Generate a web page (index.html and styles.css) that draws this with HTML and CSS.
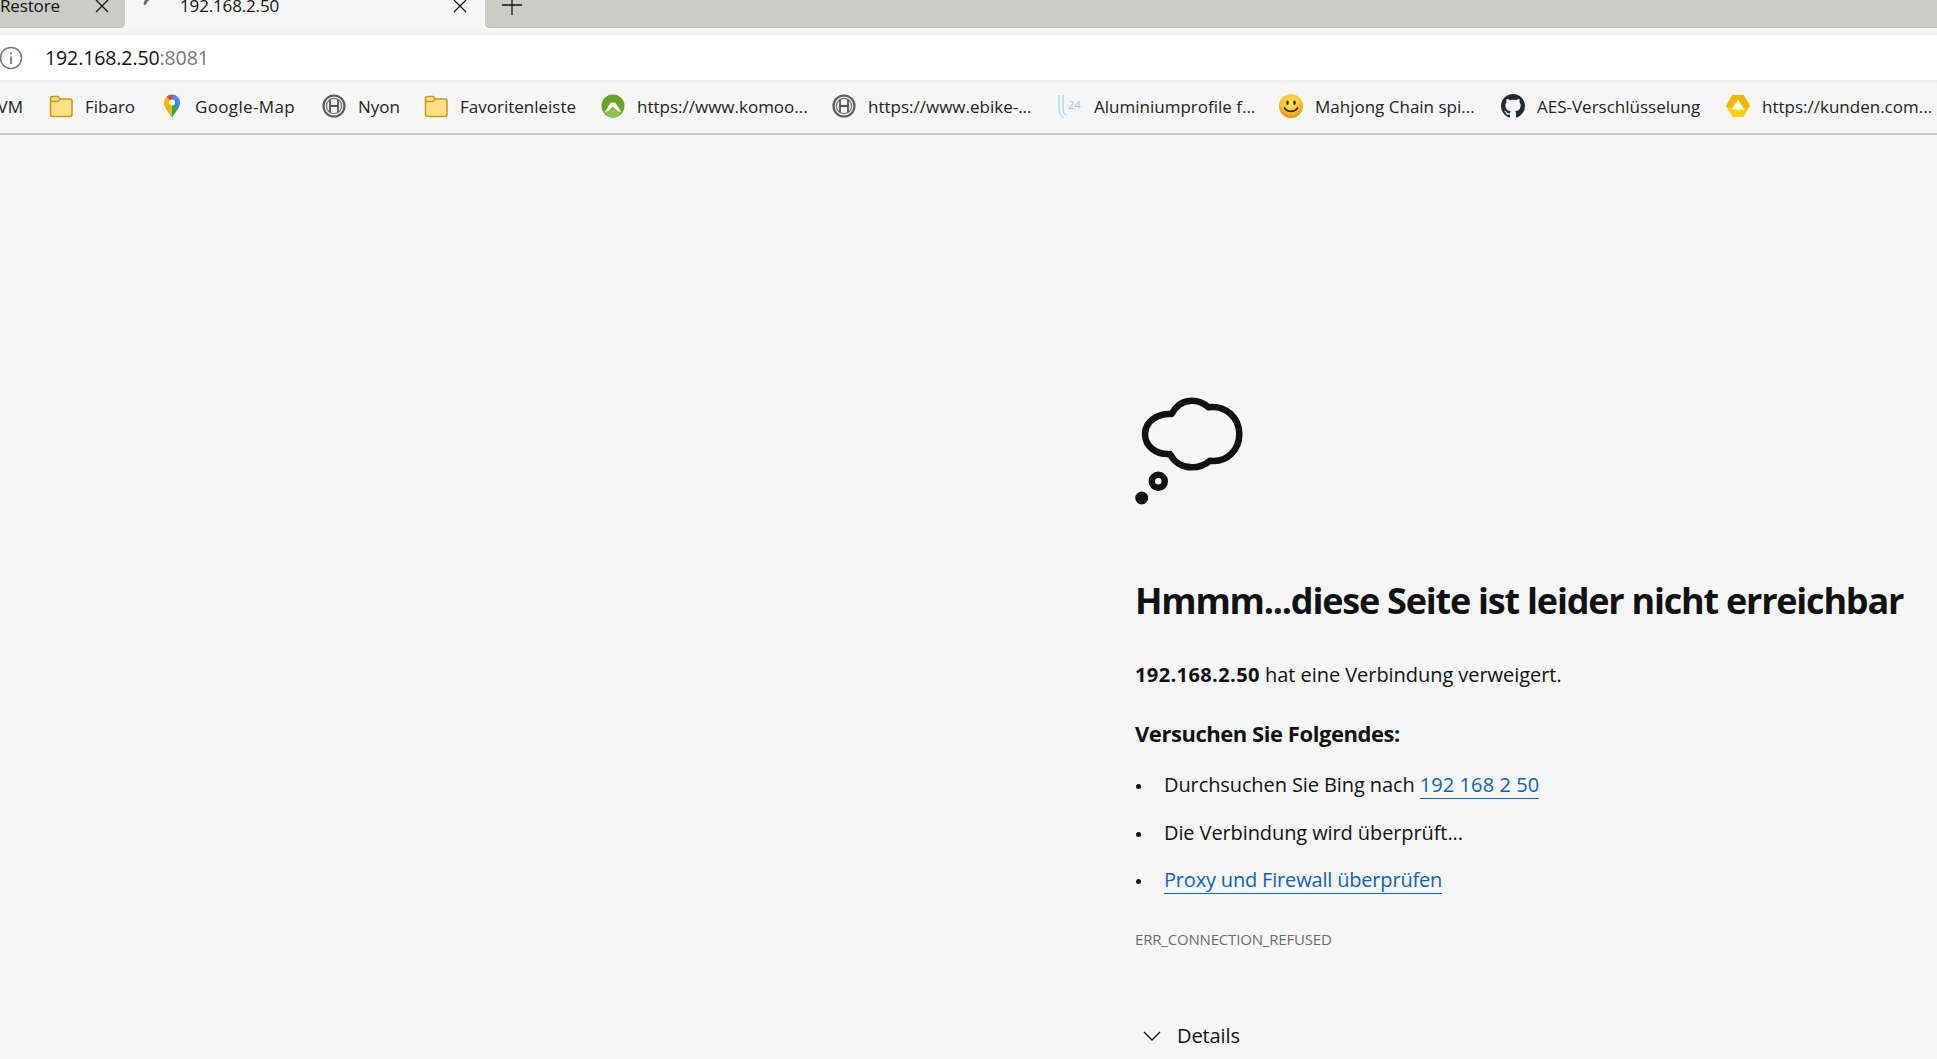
FILE: index.html
```html
<!DOCTYPE html>
<html lang="de">
<head>
<meta charset="utf-8">
<title>192.168.2.50</title>
<link rel="stylesheet" href="styles.css">
</head>
<body>
<svg class="defs" width="0" height="0" aria-hidden="true">
  <symbol id="folder" viewBox="0 0 24 24">
    <path d="M1.5 7V4.5A2 2 0 0 1 3.500 2.500H9L11.500 5H21A2 2 0 0 1 23 7V20.500A2 2 0 0 1 21 22.500H3.500A2 2 0 0 1 1.500 20.500Z" fill="#ffdf86" stroke="#c79a1e" stroke-width="1.600"/>
    <path d="M1.500 7.500H8.500L11.500 5" fill="none" stroke="#c79a1e" stroke-width="1.600"/>
  </symbol>
  <symbol id="bosch" viewBox="0 0 24 24">
    <circle cx="12" cy="12" r="10.500" fill="#f4f4f4" stroke="#5c5c5c" stroke-width="2.200"/>
    <circle cx="12" cy="12" r="7.600" fill="none" stroke="#777" stroke-width="1.400"/>
    <path d="M8 5.500V18.500M16 5.500V18.500M8 12H16" fill="none" stroke="#555" stroke-width="1.800"/>
  </symbol>
  <symbol id="x" viewBox="0 0 14 14">
    <path d="M1 1L13 13M13 1L1 13" fill="none" stroke="#111" stroke-width="1.300"/>
  </symbol>
</svg>

<header class="tabstrip">
  <div class="tab tab-back">
    <span class="tab-title">Restore</span>
    <svg class="tab-close"><use href="#x"/></svg>
  </div>
  <div class="tab tab-active">
    <svg class="tab-spinner" viewBox="0 0 10 10"><path d="M3 6.500C3.500 4.500 5 2.500 7.500 1.500" fill="none" stroke="#666" stroke-width="2.800" stroke-linecap="round"/></svg>
    <span class="tab-title tab-title-active">192.168.2.50</span>
    <svg class="tab-close"><use href="#x"/></svg>
  </div>
  <div class="tab-rest">
    <svg class="tab-plus" viewBox="0 0 20 20"><path d="M10 0V20M0 10H20" fill="none" stroke="#111" stroke-width="1.300" transform="translate(0 -5)"/></svg>
  </div>
</header>
<div class="tab-fade"></div>

<div class="addressbar">
  <svg class="info" viewBox="0 0 24 24">
    <circle cx="11" cy="12" r="10.500" fill="none" stroke="#777" stroke-width="1.500"/>
    <path d="M11 10.500V18M11 6.500V8.300" fill="none" stroke="#666" stroke-width="1.600"/>
  </svg>
  <span class="url">192.168.2.50<span class="url-port">:8081</span></span>
</div>

<nav class="bookmarks">
  <a class="bm bm-cut">VM</a>
  <a class="bm"><svg class="bm-icon"><use href="#folder"/></svg>Fibaro</a>
  <a class="bm">
    <svg class="bm-icon" viewBox="0 0 24 24">
      <path d="M12 23.500C9.500 19 4 14.500 4 8.500L12 8.500Z" fill="#fbbc04"/>
      <path d="M12 23.500C14.500 19 20 14.500 20 8.500L12 11Z" fill="#34a853"/>
      <path d="M6.300 3C4.800 4.500 4 6.300 4 8.500C4 10.500 5 12.500 6 14L12 8.500Z" fill="#fbbc04"/>
      <path d="M6.300 3C7.700 1.500 9.700 .5 12 .5L12 8.500Z" fill="#ea4335"/>
      <path d="M12 .5C14 .5 16 1.300 17.500 2.700L12 8.500Z" fill="#4285f4"/>
      <path d="M17.500 2.700C19.100 4.200 20 6.300 20 8.500C20 10.500 19 12.500 18 14L12 8.500Z" fill="#4285f4"/>
      <path d="M6 14L12 8.500L18 14L12 23.500Z" fill="#34a853"/>
      <path d="M6 14L12 8.500V23.500C10 20 8 17 6 14Z" fill="#f4b400"/>
      <circle cx="12" cy="8.500" r="3" fill="#fff"/>
    </svg><span class="bm-wide">Google-Map</span></a>
  <a class="bm"><svg class="bm-icon"><use href="#bosch"/></svg>Nyon</a>
  <a class="bm"><svg class="bm-icon"><use href="#folder"/></svg>Favoritenleiste</a>
  <a class="bm">
    <svg class="bm-icon" viewBox="0 0 24 24">
      <circle cx="12" cy="12" r="11.500" fill="#6aa127"/>
      <path d="M3.500 18.500L9 9.800C10.300 7.900 13.700 7.900 15 9.800L20.500 18.500L16.500 17L12 12.500L7.500 17Z" fill="#fff"/>
      <path d="M7.500 17L12 12.500L16.500 17L20.500 18.500C18.500 21.500 15.500 23.500 12 23.500C8.500 23.500 5.500 21.500 3.500 18.500Z" fill="#8bc34a"/>
    </svg>https://www.komoo...</a>
  <a class="bm"><svg class="bm-icon"><use href="#bosch"/></svg>https://www.ebike-...</a>
  <a class="bm">
    <svg class="bm-icon" viewBox="0 0 24 24">
      <path d="M1 1V15C1 19 2.500 22 6 24M5 1V15C5 18 6 20 8.500 21.500" fill="none" stroke="#a7d8ee" stroke-width="1.300"/>
      <text x="10" y="14.500" class="alu-text">24</text>
    </svg>Aluminiumprofile f...</a>
  <a class="bm">
    <svg class="bm-icon" viewBox="0 0 24 24">
      <defs><radialGradient id="sm" cx="50%" cy="35%" r="65%"><stop offset="0" stop-color="#ffe45c"/><stop offset=".65" stop-color="#fdc22c"/><stop offset="1" stop-color="#f08a12"/></radialGradient></defs>
      <circle cx="12" cy="12" r="12" fill="url(#sm)"/>
      <ellipse cx="8.500" cy="8.800" rx="1.300" ry="2.200" fill="#3a2a10"/>
      <ellipse cx="15.500" cy="8.800" rx="1.300" ry="2.200" fill="#3a2a10"/>
      <path d="M5.500 14C8 18.500 16 18.500 18.500 14" fill="none" stroke="#3a2a10" stroke-width="1.700" stroke-linecap="round"/>
    </svg>Mahjong Chain spi...</a>
  <a class="bm">
    <svg class="bm-icon" viewBox="0 0 16 16">
      <path fill="#24292e" d="M8 0C3.580 0 0 3.580 0 8c0 3.540 2.290 6.530 5.470 7.590.4.070.55-.17.55-.38 0-.19-.01-.82-.01-1.490-2.010.37-2.530-.49-2.690-.94-.09-.23-.48-.94-.82-1.130-.28-.15-.68-.52-.01-.53.63-.01 1.080.58 1.230.82.72 1.210 1.870.87 2.330.66.07-.52.28-.87.51-1.070-1.780-.2-3.640-.89-3.640-3.950 0-.87.31-1.590.82-2.150-.08-.2-.36-1.020.08-2.120 0 0 .67-.21 2.200.82.64-.18 1.320-.27 2-.27.68 0 1.360.09 2 .27 1.530-1.040 2.200-.82 2.200-.82.44 1.100.16 1.920.08 2.120.51.56.82 1.270.82 2.150 0 3.070-1.870 3.750-3.650 3.950.29.25.54.73.54 1.480 0 1.070-.01 1.930-.01 2.200 0 .21.15.46.55.38A8.013 8.013 0 0 0 16 8c0-4.420-3.580-8-8-8z"/>
    </svg>AES-Verschlüsselung</a>
  <a class="bm">
    <svg class="bm-icon" viewBox="0 0 24 24">
      <path d="M6.500 1H17.500L24 12L17.500 23H6.500L0 12Z" fill="#fdd00e"/>
      <path d="M6.500 1H17.500L24 12L19.500 14.500L12 5L4.500 14.500L0 12Z" fill="#f5b400"/>
      <path d="M12 6L18 15.500H6Z" fill="#fff"/>
    </svg>https://kunden.com...</a>
</nav>

<main class="error-page">
  <svg class="cloud" viewBox="0 0 120 120">
    <path class="cloud-line" d="M36.700 25C22 24 10 33 10 45C10 57 21 66 35 65C39 73 47 78.300 56.700 78.300C64 78.300 70 76 75 71.700C92 74 104.300 61 104.300 45C104.300 29 91 16 73.300 18.300C69 14 63 11.700 56.700 11.700C48 11.700 41 17 36.700 25Z"/>
    <circle class="cloud-line" cx="23.300" cy="92.300" r="6.500"/>
    <circle class="cloud-dot" cx="6.700" cy="109" r="6.500"/>
  </svg>
  <h1 class="headline">Hmmm...diese Seite ist leider nicht erreichbar</h1>
  <p class="lead"><strong class="lead-host">192.168.2.50</strong> hat eine Verbindung verweigert.</p>
  <h2 class="try">Versuchen Sie Folgendes:</h2>
  <ul class="tips">
    <li class="tip">Durchsuchen Sie Bing nach <a class="link link-query" href="#">192 168 2 50</a></li>
    <li class="tip">Die Verbindung wird überprüft...</li>
    <li class="tip"><a class="link link-proxy" href="#">Proxy und Firewall überprüfen</a></li>
  </ul>
  <div class="code">ERR_CONNECTION_REFUSED</div>
  <div class="details">
    <svg class="chevron" viewBox="0 0 18 10"><path d="M1 1L9 9L17 1" fill="none" stroke="#111" stroke-width="1.300"/></svg>
    <span>Details</span>
  </div>
</main>
</body>
</html>
```
FILE: styles.css
```css
* { box-sizing: border-box; }
html, body { margin: 0; height: 100%; overflow: hidden; }
body {
  background: #f6f6f6;
  color: #111;
  font-family: "Open Sans", "Noto Sans", "Liberation Sans", sans-serif;
}
.defs { position: absolute; }

.tabstrip { display: flex; height: 28px; background: #f6f6f6; }
.tab { display: flex; align-items: center; height: 28px; padding-bottom: 16px; font-size: 17px; line-height: 12px; }
.tab-back { width: 125px; background: #cbccc6; border-bottom-right-radius: 5px; box-shadow: inset 0 -1px 0 #bcbdb7; }
.tab-active { width: 360px; background: #f6f6f6; position: relative; }
.tab-rest { flex: 1; background: #cbccc6; border-bottom-left-radius: 5px; box-shadow: inset 0 -1px 0 #bcbdb7; }
.tab-title { flex: 1; white-space: nowrap; letter-spacing: -.15px; }
.tab-title-active { padding-left: 28px; }
.tab-close { width: 14px; height: 14px; margin-right: 16px; flex: none; }
.tab-active .tab-close { margin-right: 18px; }
.tab-spinner { width: 10px; height: 10px; margin-left: 17px; margin-top: -8px; flex: none; }
.tab-plus { display: block; width: 20px; height: 20px; margin-left: 17px; }
.tab-fade { height: 7px; background: linear-gradient(#f6f6f6 0, #f4f4f4 60%, #ececec 100%); }

.addressbar { display: flex; align-items: center; height: 45px; background: #fff; }
.info { width: 24px; height: 24px; flex: none; }
.url { margin-left: 21px; font-size: 19.500px; letter-spacing: -.1px; color: #111; }
.url-port { color: #777; }

.bookmarks {
  display: grid;
  grid-template-columns: 49px 111px 162px 102px 177px 231px 226px 221px 222px 225px 1fr;
  align-items: center;
  height: 55px;
  padding-bottom: 1px;
  background: #f6f6f6;
  border-bottom: 2px solid #c9c9c9;
  box-shadow: inset 0 6px 5px -5px #e6e6e6;
  font-size: 17px;
  color: #222;
}
.bm { display: flex; align-items: center; gap: 12px; white-space: nowrap; min-width: 0; }
.bm-cut { justify-content: flex-end; padding-right: 26px; }
.bm-icon { width: 24px; height: 24px; flex: none; }
.bm-wide { letter-spacing: .35px; margin-left: -1px; }
.alu-text { font-size: 11px; fill: #92cde8; }

.error-page { padding: 254px 0 0 1135px; }
.cloud { display: block; width: 120px; height: 120px; }
.cloud-line { fill: none; stroke: #111; stroke-width: 6.500; stroke-linejoin: round; }
.cloud-dot { fill: #111; }
.headline { margin: 68px 0 0; font-size: 36px; line-height: 48px; font-weight: 700; white-space: nowrap; letter-spacing: -1.220px; }
.lead { margin: 37px 0 0; font-size: 20px; line-height: 26px; letter-spacing: -.05px; }
.lead-host { font-weight: 700; letter-spacing: .4px; }
.try { margin: 32px 0 0; font-size: 22px; line-height: 26px; font-weight: 700; letter-spacing: -.45px; }
.tips { list-style: none; margin: 26px 0 0; padding: 0; display: flex; flex-direction: column; gap: 21.500px; }
.tip { position: relative; padding-left: 29px; font-size: 20px; line-height: 26px; letter-spacing: -.1px; }
.tip::before { content: ""; position: absolute; left: 1px; top: 12px; width: 5px; height: 5px; border-radius: 50%; background: #111; }
.link { color: #0f62ae; text-decoration: none; border-bottom: 1px solid #0063b1; }
.link-query { letter-spacing: .1px; }
.link-proxy { letter-spacing: -.18px; }
.code { margin-top: 36px; font-size: 15px; line-height: 20px; color: #6b6b6b; letter-spacing: -.18px; }
.details { display: flex; align-items: center; gap: 16px; margin: 74px 0 0 8px; font-size: 20px; line-height: 26px; letter-spacing: -.1px; }
.chevron { width: 18px; height: 10px; flex: none; }
```
